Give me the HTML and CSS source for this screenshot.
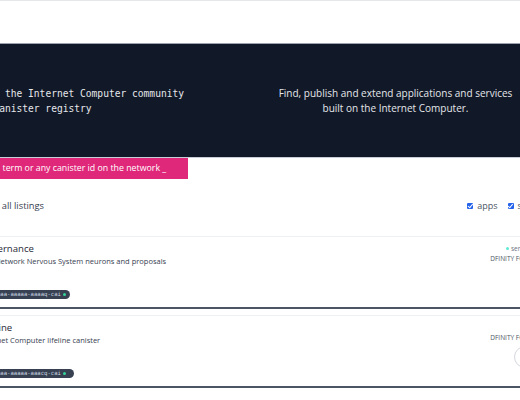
FILE: index.html
```html
<!DOCTYPE html>
<html lang="en">
<head>
<meta charset="utf-8">
<title>Canister registry</title>
<link rel="stylesheet" href="styles.css">
</head>
<body>
<header class="topbar"></header>
<section class="hero">
  <div class="hero-col">
    <p class="hero-mono">Browse and search the Internet Computer community canister registry</p>
  </div>
  <div class="hero-col">
    <p class="hero-sans">Find, publish and extend applications and services built on the Internet Computer.</p>
  </div>
</section>
<div class="search-row">
  <div class="search">Find a term or any canister id on the network _</div>
</div>
<div class="filters">
  <span class="filters-label">View all listings</span>
  <div class="checks">
    <label class="check"><span class="cb"></span>apps</label>
    <label class="check"><span class="cb"></span>services</label>
  </div>
</div>
<main class="list">
  <article class="card">
    <div class="card-main">
      <div class="card-name">Governance</div>
      <div class="card-desc">The Network Nervous System neurons and proposals</div>
      <span class="chip">rrkah-fqaaa-aaaaa-aaaaq-cai<i class="chip-dot"></i></span>
    </div>
    <div class="card-side">
      <div class="tag"><i class="tag-dot"></i>service</div>
      <div class="owner">DFINITY Foundation</div>
    </div>
  </article>
  <article class="card">
    <div class="card-main">
      <div class="card-name">Lifeline</div>
      <div class="card-desc">Internet Computer lifeline canister</div>
      <span class="chip chip-wide">rno2w-sqaaa-aaaaa-aaacq-cai<i class="chip-dot"></i></span>
    </div>
    <div class="card-side">
      <div class="tag tag-empty"></div>
      <div class="owner">DFINITY Foundation</div>
      <svg class="avatar" width="24" height="24" viewBox="0 0 24 24"><circle cx="12" cy="12" r="10.5" fill="none" stroke="#d4d7dc" stroke-width="1"/></svg>
    </div>
  </article>
</main>
</body>
</html>
```
FILE: styles.css
```css
html, body {
  margin: 0;
  padding: 0;
  background: #ffffff;
}
body {
  width: 520px;
  height: 400px;
  overflow: hidden;
  font-family: "Open Sans", "Noto Sans", sans-serif;
  color: #374151;
}
.topbar {
  height: 42px;
  border-top: 1px solid #e5e7eb;
  border-bottom: 1px solid #9ca3af;
  background: #ffffff;
}
.hero {
  display: grid;
  grid-template-columns: 353px 353px;
  margin-left: -134px;
  height: 113px;
  background: #111827;
  border-bottom: 1px solid #c9ced6;
}
.hero-col {
  display: flex;
  align-items: center;
  justify-content: center;
  text-align: center;
}
.hero p {
  margin: 0;
  line-height: 15px;
  color: #e5e7eb;
}
.hero-mono {
  font-family: "DejaVu Sans Mono", monospace;
  font-size: 9.6px;
  max-width: 300px;
}
.hero-sans {
  font-size: 10px;
  max-width: 245px;
}
.search-row {
  height: 21px;
  display: flex;
}
.search {
  margin-left: -40px;
  width: 228px;
  padding-left: 15.5px;
  box-sizing: border-box;
  background: #e0287a;
  color: #ffffff;
  font-size: 8.8px;
  line-height: 21px;
  white-space: nowrap;
}
.filters {
  display: flex;
  align-items: center;
  justify-content: space-between;
  margin-left: -21px;
  width: 572px;
  height: 52px;
  padding-top: 1px;
  box-sizing: border-box;
}
.filters-label {
  font-size: 9.3px;
  color: #374151;
}
.checks {
  display: flex;
  gap: 10px;
  font-size: 9px;
  color: #4b5563;
}
.check {
  display: flex;
  align-items: center;
  gap: 4px;
}
.cb {
  width: 6px;
  height: 6px;
  border-radius: 1px;
  background: #2563eb;
  position: relative;
}
.cb::after {
  content: "";
  position: absolute;
  left: 1.5px;
  top: 0.5px;
  width: 2px;
  height: 3.5px;
  border: solid #ffffff;
  border-width: 0 1px 1px 0;
  transform: rotate(40deg);
}
.list {
  margin-left: -40px;
  width: 620px;
  margin-top: 5px;
}
.card {
  display: flex;
  justify-content: space-between;
  padding: 5px 22px 8px 20px;
  border-top: 1px solid #eef0f3;
  border-bottom: 2px solid #4b5563;
  margin-bottom: 6px;
  height: 57px;
}
.card-main {
  display: flex;
  flex-direction: column;
  align-items: flex-start;
}
.card-name {
  font-size: 9.6px;
  line-height: 13px;
  color: #1f2937;
}
.card-desc {
  font-size: 7.5px;
  line-height: 12px;
  color: #374151;
}
.chip {
  margin-top: auto;
  margin-left: -15px;
  display: inline-flex;
  align-items: center;
  gap: 2px;
  height: 9px;
  padding: 0 4px 0 5px;
  border-radius: 5px;
  background: #374151;
  color: #cbd5e1;
  font-family: "DejaVu Sans Mono", monospace;
  font-size: 5.6px;
  line-height: 9px;
}
.chip-wide {
  padding-right: 8px;
}
.chip-dot {
  width: 3px;
  height: 3px;
  border-radius: 50%;
  background: #34d399;
}
.card-side {
  display: flex;
  flex-direction: column;
  align-items: flex-end;
  position: relative;
  width: 70px;
}
.tag {
  display: flex;
  align-items: center;
  gap: 2px;
  height: 12px;
  font-size: 6.5px;
  color: #6b7280;
  padding-right: 26px;
}
.tag-dot {
  width: 3px;
  height: 3px;
  border-radius: 50%;
  background: #5eead4;
}
.owner {
  font-size: 6.5px;
  line-height: 10px;
  color: #4b5563;
  text-transform: uppercase;
  white-space: nowrap;
}
.avatar {
  margin-top: 2px;
  align-self: flex-start;
  margin-left: 25px;
}
```
